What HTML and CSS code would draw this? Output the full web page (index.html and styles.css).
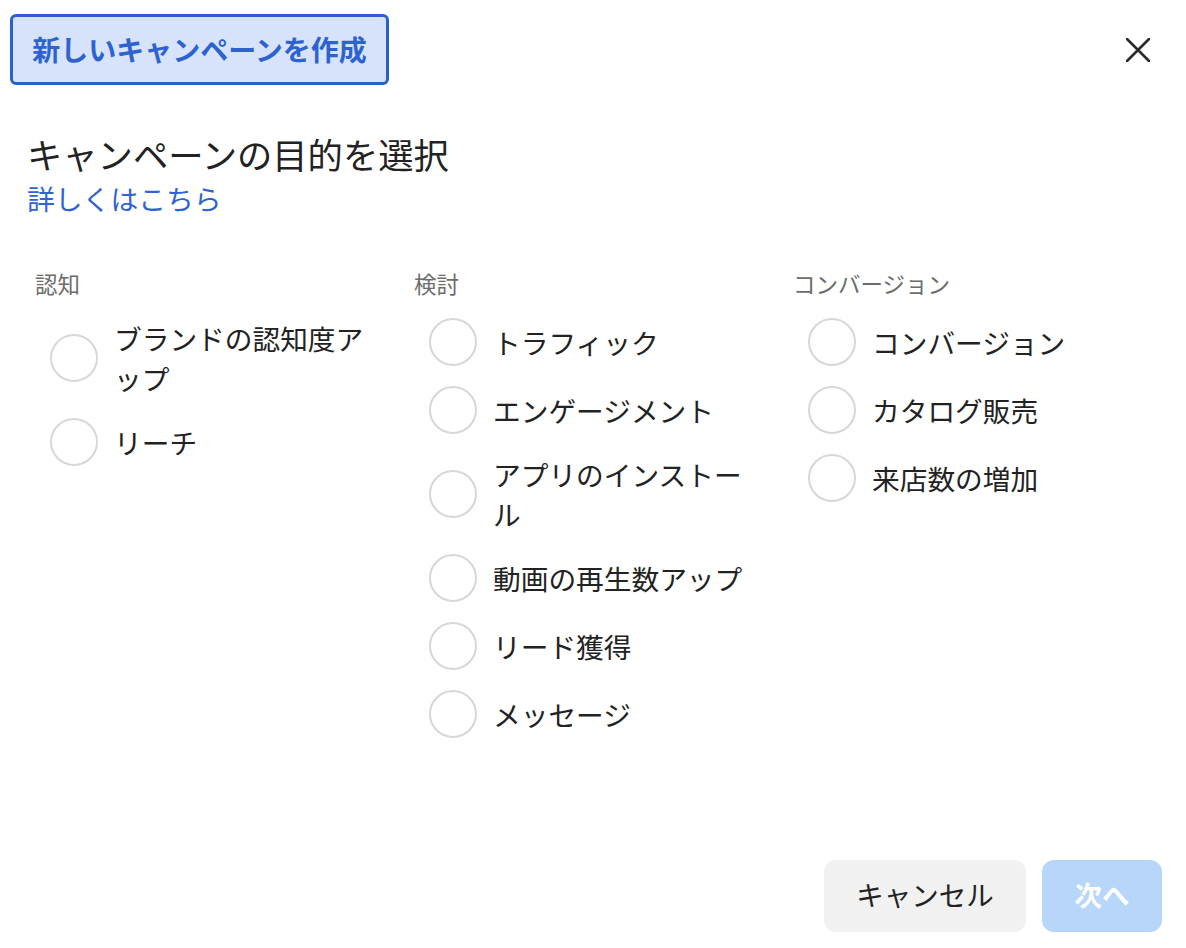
FILE: index.html
```html
<!DOCTYPE html>
<html lang="ja">
<head>
<meta charset="utf-8">
<title>新しいキャンペーンを作成</title>
<link rel="stylesheet" href="styles.css">
</head>
<body>
<div class="dialog">
  <header class="header">
    <div class="title-box">新しいキャンペーンを作成</div>
    <button class="close" aria-label="閉じる">
      <svg width="24" height="24" viewBox="0 0 24 24"><path d="M1 1L23 23M23 1L1 23" stroke="#2b2b2b" stroke-width="2.6" stroke-linecap="round" fill="none"/></svg>
    </button>
  </header>

  <div class="intro">
    <h1 class="heading">キャンペーンの目的を選択</h1>
    <a class="link" href="#">詳しくはこちら</a>
  </div>

  <div class="columns">
    <section class="col">
      <div class="col-label">認知</div>
      <div class="options">
        <label class="option"><span class="radio"></span><span class="opt-text">ブランドの認知度アップ</span></label>
        <label class="option"><span class="radio"></span><span class="opt-text">リーチ</span></label>
      </div>
    </section>
    <section class="col">
      <div class="col-label">検討</div>
      <div class="options">
        <label class="option"><span class="radio"></span><span class="opt-text">トラフィック</span></label>
        <label class="option"><span class="radio"></span><span class="opt-text">エンゲージメント</span></label>
        <label class="option"><span class="radio"></span><span class="opt-text">アプリのインストール</span></label>
        <label class="option"><span class="radio"></span><span class="opt-text">動画の再生数アップ</span></label>
        <label class="option"><span class="radio"></span><span class="opt-text">リード獲得</span></label>
        <label class="option"><span class="radio"></span><span class="opt-text">メッセージ</span></label>
      </div>
    </section>
    <section class="col">
      <div class="col-label">コンバージョン</div>
      <div class="options">
        <label class="option"><span class="radio"></span><span class="opt-text">コンバージョン</span></label>
        <label class="option"><span class="radio"></span><span class="opt-text">カタログ販売</span></label>
        <label class="option"><span class="radio"></span><span class="opt-text">来店数の増加</span></label>
      </div>
    </section>
  </div>

  <footer class="footer">
    <button class="btn btn-cancel">キャンセル</button>
    <button class="btn btn-next">次へ</button>
  </footer>
</div>
</body>
</html>
```
FILE: styles.css
```css
* { box-sizing: border-box; }
html, body {
  margin: 0;
  padding: 0;
  background: #ffffff;
}
body {
  font-family: "Noto Sans CJK JP", "Noto Sans", sans-serif;
  color: #222222;
}
.dialog {
  height: 948px;
  padding: 14px 24px 16px 10px;
  display: flex;
  flex-direction: column;
}
.header {
  display: flex;
  justify-content: space-between;
  align-items: center;
}
.title-box {
  height: 71px;
  width: 379px;
  border: 3px solid #2c60c9;
  border-radius: 6px;
  background: #d6e3fa;
  color: #2e63cf;
  font-size: 28px;
  font-weight: 700;
  display: flex;
  align-items: center;
  justify-content: center;
  line-height: 1;
  padding-bottom: 2px;
}
.close {
  width: 48px;
  height: 48px;
  border: 0;
  background: transparent;
  padding: 0;
  display: flex;
  align-items: center;
  justify-content: center;
  cursor: pointer;
  margin-top: 1px;
}
.intro {
  margin: 47px 0 0 17px;
  display: flex;
  flex-direction: column;
  align-items: flex-start;
}
.heading {
  margin: 0;
  font-size: 35.3px;
  font-weight: 400;
  line-height: 44px;
  color: #222222;
}
.link {
  margin-top: 2px;
  font-size: 27.8px;
  line-height: 40px;
  color: #2f64d0;
  text-decoration: none;
}
.columns {
  margin: 50px 0 0 25px;
  display: grid;
  grid-template-columns: 379px 379px 379px;
  align-items: start;
}
.col-label {
  font-size: 22.5px;
  line-height: 30px;
  color: #6c6c6c;
}
.options {
  margin-top: 20px;
  padding-left: 15px;
  display: flex;
  flex-direction: column;
  gap: 20px;
}
.option {
  display: flex;
  align-items: center;
  gap: 16px;
  min-height: 48px;
  cursor: pointer;
}
.radio {
  flex: 0 0 48px;
  width: 48px;
  height: 48px;
  border: 2px solid #d7d7d7;
  border-radius: 50%;
  background: #ffffff;
}
.opt-text {
  max-width: 264px;
  font-size: 27.7px;
  line-height: 40px;
  padding-bottom: 4px;
  margin-bottom: -4px;
  color: #222222;
}
.footer {
  margin-top: auto;
  display: flex;
  justify-content: flex-end;
  gap: 16px;
}
.btn {
  height: 72px;
  border: 0;
  border-radius: 12px;
  font-family: inherit;
  font-size: 27.5px;
  line-height: 1;
  padding: 0 0 3px;
  cursor: pointer;
}
.btn-cancel {
  width: 202px;
  background: #f1f1f1;
  color: #222222;
}
.btn-next {
  width: 120px;
  background: #b8d5fa;
  color: #ffffff;
  font-weight: 700;
}
```
